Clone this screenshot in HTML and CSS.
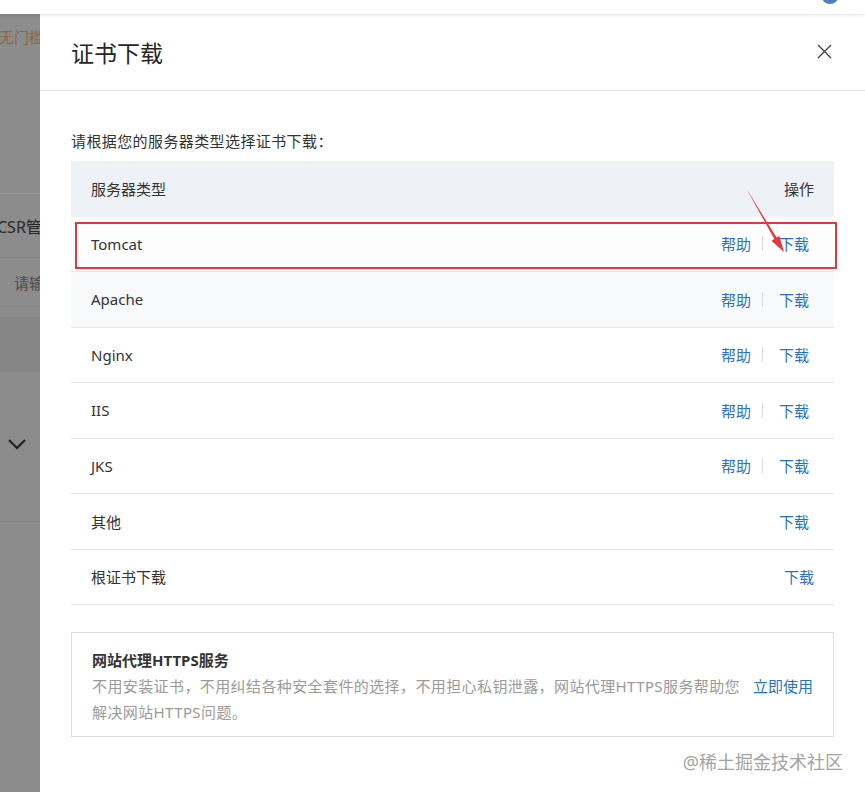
FILE: index.html
```html
<!DOCTYPE html>
<html lang="zh-CN">
<head>
    <meta charset="UTF-8">
    <title>证书下载</title>
    <link rel="stylesheet" href="styles.css">
</head>
<body>
    <div class="topbar">
        <span class="avatar"></span>
    </div>

    <div class="main">
        <!-- страница под затемнением -->
        <div class="backdrop">
            <div class="bd-row bd-promo"><span>免费无门槛</span></div>
            <div class="bd-gap"></div>
            <div class="bd-row bd-title"><span>CSR管理</span></div>
            <div class="bd-row bd-input"><span>请输入</span></div>
            <div class="bd-row bd-dark"></div>
            <div class="bd-row bd-arrow">
                <svg width="20" height="12" viewBox="0 0 20 12"><path d="M2 2 L10 10 L18 2" fill="none" stroke="#1e1e1e" stroke-width="2"/></svg>
            </div>
            <div class="bd-row bd-last"></div>
        </div>

        <div class="drawer">
            <div class="drawer-header">
                <h2>证书下载</h2>
                <span class="close">
                    <svg width="15" height="15" viewBox="0 0 15 15"><path d="M1 1 L14 14 M14 1 L1 14" stroke="#444" stroke-width="1.4"/></svg>
                </span>
            </div>

            <div class="drawer-body">
                <p class="intro">请根据您的服务器类型选择证书下载：</p>

                <div class="cert-table">
                    <div class="row head">
                        <span>服务器类型</span>
                        <span class="ops">操作</span>
                    </div>
                    <div class="row tomcat">
                        <span>Tomcat</span>
                        <span class="ops"><a>帮助</a><i class="sep"></i><a class="dl">下载</a></span>
                    </div>
                    <div class="row hover">
                        <span>Apache</span>
                        <span class="ops"><a>帮助</a><i class="sep"></i><a class="dl">下载</a></span>
                    </div>
                    <div class="row">
                        <span>Nginx</span>
                        <span class="ops"><a>帮助</a><i class="sep"></i><a class="dl">下载</a></span>
                    </div>
                    <div class="row">
                        <span>IIS</span>
                        <span class="ops"><a>帮助</a><i class="sep"></i><a class="dl">下载</a></span>
                    </div>
                    <div class="row">
                        <span>JKS</span>
                        <span class="ops"><a>帮助</a><i class="sep"></i><a class="dl">下载</a></span>
                    </div>
                    <div class="row">
                        <span>其他</span>
                        <span class="ops"><a class="dl">下载</a></span>
                    </div>
                    <div class="row">
                        <span>根证书下载</span>
                        <span class="ops"><a>下载</a></span>
                    </div>
                </div>

                <div class="proxy-box">
                    <div class="proxy-title">网站代理HTTPS服务</div>
                    <div class="proxy-line">
                        <p class="proxy-desc">不用安装证书，不用纠结各种安全套件的选择，不用担心私钥泄露，网站代理HTTPS服务帮助您解决网站HTTPS问题。</p>
                        <a class="proxy-link">立即使用</a>
                    </div>
                </div>

                <div class="watermark">@稀土掘金技术社区</div>
            </div>
        </div>
    </div>

    <!-- пометки на скриншоте -->
    <div class="mark-box"></div>
    <svg class="mark-arrow" width="865" height="300" viewBox="0 0 865 300">
        <polygon points="746,188 776.6,237.6 779.4,236 784,252 771.5,240.7 774.3,239" fill="#e4393c"/>
    </svg>
</body>
</html>
```

FILE: styles.css
```css
body {
    margin: 0;
    width: 865px;
    height: 792px;
    overflow: hidden;
    position: relative;
    font-family: "Noto Sans", "Noto Sans CJK SC", sans-serif;
    color: #333;
    background-color: #fff;
}
.topbar {
    height: 14px;
    background-color: #fff;
    box-shadow: 0 1px 3px rgba(0,0,0,0.12);
    position: relative;
    z-index: 2;
}
.avatar {
    position: absolute;
    right: 27px;
    top: -10px;
    width: 16px;
    height: 14px;
    border-radius: 50%;
    background-color: #4f7fb6;
}
.main {
    display: flex;
    height: 778px;
}

/* затемнённая страница слева */
.backdrop {
    width: 40px;
    flex-shrink: 0;
    background-color: #8c8c8c;
    overflow: hidden;
    font-size: 16px;
}
.bd-row {
    white-space: nowrap;
    border-bottom: 1px solid #858585;
    display: flex;
    align-items: center;
}
.bd-promo {
    height: 44px;
    border-bottom: none;
    color: #8a6a3e;
    font-size: 15px;
}
.bd-promo span {
    margin-left: -31px;
}
.bd-gap {
    height: 135px;
    border-bottom: 1px solid #979797;
}
.bd-title {
    height: 63px;
    color: #262626;
}
.bd-title span {
    margin-left: -3px;
}
.bd-input {
    height: 48px;
    color: #4a4a4a;
    font-size: 15px;
}
.bd-input span {
    margin-left: 14px;
}
.bd-row.bd-dark {
    height: 10px;
}
.bd-arrow {
    height: 203px;
    background: linear-gradient(#868686 0, #868686 54px, #8c8c8c 54px);
    align-items: flex-start;
}
.bd-arrow svg {
    margin: 120px 0 0 7px;
}
.bd-last {
    border-bottom: none;
}

/* панель */
.drawer {
    flex: 1;
    background-color: #fff;
}
.drawer-header {
    height: 76px;
    border-bottom: 1px solid #e8e8e8;
    display: flex;
    align-items: center;
    justify-content: space-between;
    padding: 0 33px 0 31px;
}
.drawer-header h2 {
    margin: 0;
    font-size: 23px;
    font-weight: normal;
    color: #262626;
}
.close {
    display: flex;
    margin-top: -2px;
}
.drawer-body {
    padding: 0 31px;
}
.intro {
    margin: 40px 0 10px;
    font-size: 15px;
    line-height: 20px;
    letter-spacing: 0.4px;
}
.cert-table {
    font-size: 15px;
}
.row {
    box-sizing: border-box;
    height: 55.5px;
    border-bottom: 1px solid #e6e6e6;
    display: flex;
    align-items: center;
    justify-content: space-between;
    padding: 0 20px;
}
.row.head {
    background-color: #eef2f7;
    border-bottom-color: #f3f3f3;
}
.row.tomcat {
    background-color: #fdfdfd;
}
.row.hover {
    background-color: #f8f9fb;
}
.ops {
    display: flex;
    align-items: center;
}
.ops a {
    color: #2a72c3;
    cursor: pointer;
}
.ops a.dl {
    margin-right: 5px;
}
.sep {
    width: 1px;
    height: 15px;
    background-color: #dcdcdc;
    margin: 0 16px 0 11px;
}

.proxy-box {
    margin-top: 27px;
    border: 1px solid #dedede;
    padding: 14px 20px 11px;
}
.proxy-title {
    font-size: 15px;
    font-weight: bold;
    line-height: 26px;
}
.proxy-line {
    display: flex;
    justify-content: space-between;
}
.proxy-desc {
    margin: 0;
    width: 650px;
    font-size: 15px;
    line-height: 26px;
    letter-spacing: 0.4px;
    color: #9a9a9a;
}
.proxy-link {
    color: #2a72c3;
    font-size: 15px;
    line-height: 26px;
    white-space: nowrap;
}
.watermark {
    text-align: right;
    margin: 11px -9px 0 0;
    font-size: 18px;
    color: #a3a3a3;
}

/* пометки */
.mark-box {
    position: absolute;
    left: 75px;
    top: 222px;
    width: 758px;
    height: 43px;
    border: 2px solid #e0383d;
}
.mark-arrow {
    position: absolute;
    left: 0;
    top: 0;
}
```
